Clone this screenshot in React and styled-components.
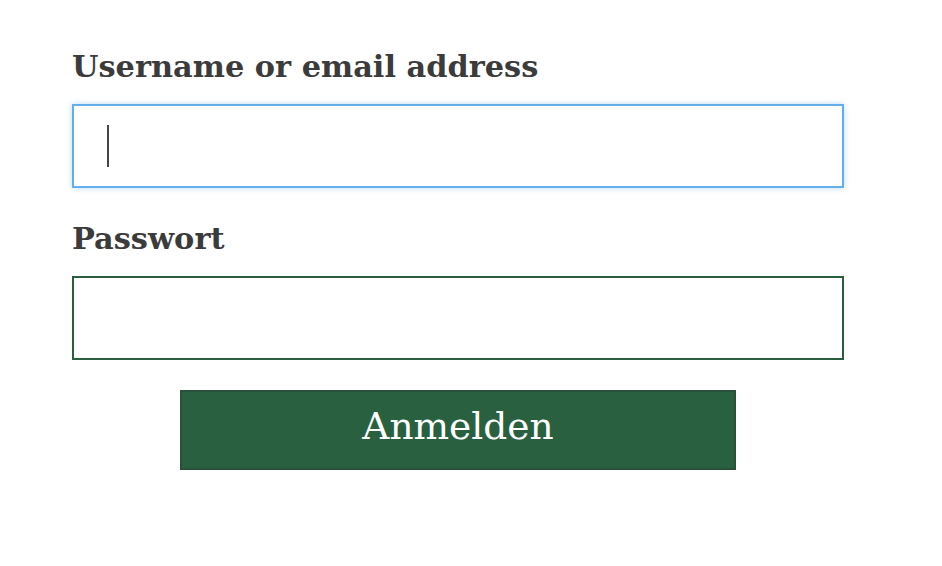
import { createGlobalStyle } from 'styled-components';
import styled from 'styled-components';

const Global = createGlobalStyle`
  html, body {
    margin: 0;
    background: #ffffff;
  }
`

const Form = styled.form`
  width: 772px;
  padding: 44px 0 0 72px;
  display: flex;
  flex-direction: column;
`

const Label = styled.label`
  font-family: "DejaVu Serif", serif;
  font-weight: 700;
  font-size: 30.4px;
  line-height: 44px;
  color: #3b3b3b;
  margin-bottom: 16px;
`

const Input = styled.div`
  box-sizing: border-box;
  height: 84px;
  border: 2px solid ${p => (p.focused ? '#66aee8' : '#2a5e3f')};
  box-shadow: ${p => (p.focused ? '0 0 6px rgba(102, 174, 232, 0.45)' : 'none')};
  margin-bottom: 28px;
  display: flex;
  align-items: center;
  padding-left: 33px;
`

const Caret = styled.span`
  width: 2px;
  height: 42px;
  background: #444;
`

const Button = styled.button`
  align-self: center;
  box-sizing: border-box;
  width: 556px;
  height: 80px;
  margin-top: 2px;
  padding: 0 0 8px;
  background: #296140;
  border: 2px solid #2a4f3b;
  color: #ffffff;
  font-family: "DejaVu Serif", serif;
  font-size: 37.5px;
`

export default function App() {
  return (
    <>
      <Global />
      <Form>
        <Label>Username or email address</Label>
        <Input focused>
          <Caret />
        </Input>
        <Label>Passwort</Label>
        <Input />
        <Button type="button">Anmelden</Button>
      </Form>
    </>
  );
}
